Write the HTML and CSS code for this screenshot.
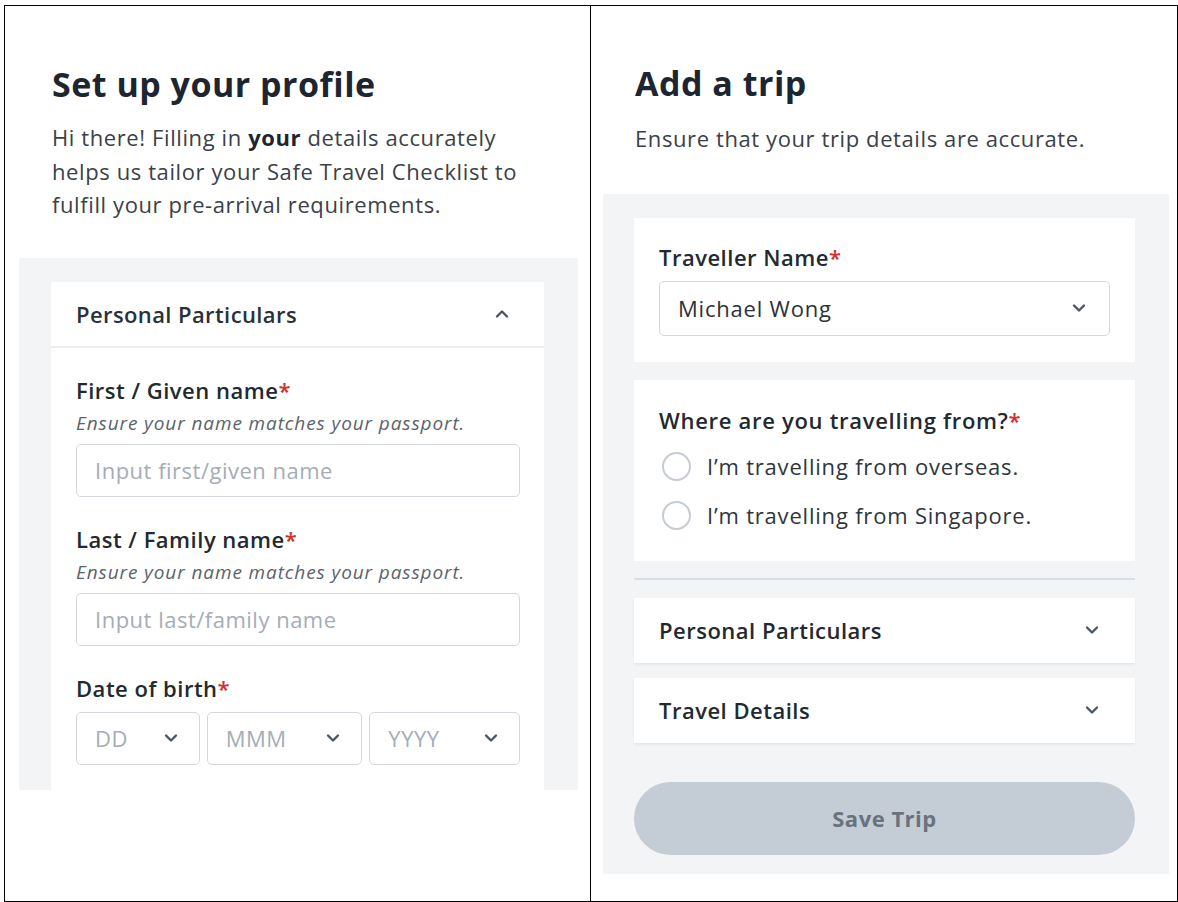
FILE: index.html
```html
<!DOCTYPE html>
<html lang="en">
<head>
    <meta charset="UTF-8">
    <meta name="viewport" content="width=device-width, initial-scale=1.0">
    <title>Safe Travel</title>
    <link rel="stylesheet" href="styles.css">
</head>
<body>
    <div class="frame">
        <section class="screen screen-profile">
            <h1 class="title">Set up your profile</h1>
            <p class="intro">Hi there! Filling in <strong>your</strong> details accurately helps us tailor your Safe Travel Checklist to fulfill your pre-arrival requirements.</p>

            <div class="panel panel-profile">
                <div class="card">
                    <div class="card-head">
                        <span>Personal Particulars</span>
                        <svg class="chev" viewBox="0 0 16 16"><path d="M3 10.5l5-5 5 5"/></svg>
                    </div>
                    <div class="card-body">
                        <label class="label">First / Given name<span class="req">*</span></label>
                        <p class="hint">Ensure your name matches your passport.</p>
                        <div class="field placeholder">Input first/given name</div>

                        <label class="label">Last / Family name<span class="req">*</span></label>
                        <p class="hint">Ensure your name matches your passport.</p>
                        <div class="field placeholder">Input last/family name</div>

                        <label class="label">Date of birth<span class="req">*</span></label>
                        <div class="dob">
                            <div class="field select placeholder dd">DD<svg class="chev" viewBox="0 0 16 16"><path d="M3 5.5l5 5 5-5"/></svg></div>
                            <div class="field select placeholder mmm">MMM<svg class="chev" viewBox="0 0 16 16"><path d="M3 5.5l5 5 5-5"/></svg></div>
                            <div class="field select placeholder yyyy">YYYY<svg class="chev" viewBox="0 0 16 16"><path d="M3 5.5l5 5 5-5"/></svg></div>
                        </div>
                    </div>
                </div>
            </div>
        </section>

        <section class="screen screen-trip">
            <h1 class="title">Add a trip</h1>
            <p class="intro">Ensure that your trip details are accurate.</p>

            <div class="panel panel-trip">
                <div class="card card-pad">
                    <label class="label">Traveller Name<span class="req">*</span></label>
                    <div class="field select value">Michael Wong<svg class="chev" viewBox="0 0 16 16"><path d="M3 5.5l5 5 5-5"/></svg></div>
                </div>

                <div class="card card-pad card-radio">
                    <label class="label">Where are you travelling from?<span class="req">*</span></label>
                    <div class="radio"><span class="dot"></span>I’m travelling from overseas.</div>
                    <div class="radio"><span class="dot"></span>I’m travelling from Singapore.</div>
                </div>

                <hr class="rule">

                <div class="card fold">
                    <span>Personal Particulars</span>
                    <svg class="chev" viewBox="0 0 16 16"><path d="M3 5.5l5 5 5-5"/></svg>
                </div>
                <div class="card fold">
                    <span>Travel Details</span>
                    <svg class="chev" viewBox="0 0 16 16"><path d="M3 5.5l5 5 5-5"/></svg>
                </div>

                <button class="save" disabled>Save Trip</button>
            </div>
        </section>
    </div>
</body>
</html>
```

FILE: styles.css
```css
* {
    box-sizing: border-box;
}
body {
    margin: 0;
    background: #fff;
    font-family: 'Open Sans', 'Noto Sans', sans-serif;
    color: #1f2933;
}
.frame {
    margin: 5px 0 0 4px;
    width: 1174px;
    height: 897px;
    border: 1px solid #000;
    display: grid;
    grid-template-columns: 586px 1fr;
    overflow: hidden;
}
.screen-profile {
    border-right: 1px solid #000;
}
.title {
    margin: 0;
    font-size: 34px;
    line-height: 40px;
    font-weight: 700;
    color: #1d2630;
    letter-spacing: 0.5px;
}
.intro {
    margin: 0;
    font-size: 22px;
    line-height: 33.5px;
    letter-spacing: 0.6px;
    color: #3b4148;
}
.intro strong {
    font-weight: 700;
    color: #1d2630;
}
.screen-profile .title {
    margin: 58px 0 0 47px;
}
.screen-profile .intro {
    margin: 17px 0 0 47px;
    width: 488px;
}
.screen-trip .title {
    margin: 57px 0 0 44px;
}
.screen-trip .intro {
    margin: 19px 0 0 44px;
}

.panel {
    background: #f3f4f6;
}
.panel-profile {
    margin: 36px 0 0 14px;
    width: 559px;
    height: 532px;
    padding: 24px 34px 0 32px;
    overflow: hidden;
}
.panel-trip {
    margin: 38px 0 0 12px;
    width: 566px;
    height: 680px;
    padding: 24px 34px 0 31px;
}
.card {
    background: #fff;
}
.card-head {
    height: 66px;
    padding: 0 34px 0 25px;
    display: flex;
    align-items: center;
    justify-content: space-between;
    border-bottom: 2px solid #eceef1;
    font-size: 22px;
    font-weight: 600;
    letter-spacing: 0.4px;
    color: #2a3138;
}
.card-body {
    padding: 27px 24px 30px 25px;
    height: 460px;
}
.label {
    display: block;
    font-size: 22px;
    line-height: 30px;
    font-weight: 600;
    letter-spacing: 0.5px;
    color: #22292f;
}
.req {
    color: #d0312d;
}
.hint {
    margin: 6px 0 9px;
    font-size: 19px;
    line-height: 24px;
    letter-spacing: 0.9px;
    font-style: italic;
    color: #5b636b;
}
.field {
    height: 53px;
    border: 1.5px solid #d3d8de;
    border-radius: 5px;
    background: #fff;
    display: flex;
    align-items: center;
    padding: 0 18px;
    font-size: 22px;
    letter-spacing: 0.5px;
    margin-bottom: 27px;
}
.placeholder {
    color: #a4adb6;
}
.value {
    color: #2b3238;
    letter-spacing: 0.8px;
}
.select {
    justify-content: space-between;
}
.chev {
    width: 16px;
    height: 16px;
    fill: none;
    stroke: #4c5661;
    stroke-width: 2.4;
    stroke-linecap: round;
    stroke-linejoin: round;
    flex-shrink: 0;
}
.dob {
    display: flex;
    gap: 7px;
    margin-top: 9px;
}
.dob .field {
    margin-bottom: 0;
    padding-right: 20px;
}
.dd {
    width: 124px;
}
.mmm {
    width: 156px;
}
.yyyy {
    width: 151px;
}

.card-pad {
    padding: 24px 25px 0 25px;
}
.panel-trip .card-pad:first-child {
    height: 144px;
}
.panel-trip .card-pad .field {
    margin-top: 9px;
    margin-bottom: 0;
    height: 55px;
    padding-right: 22px;
}
.card-radio {
    margin-top: 18px;
    height: 181px;
    padding-top: 25px;
}
.card-radio .label {
    margin-bottom: 7px;
    letter-spacing: 0.7px;
}
.radio {
    display: flex;
    align-items: center;
    gap: 16px;
    font-size: 22px;
    letter-spacing: 0.8px;
    color: #2f363d;
    height: 49px;
    margin-left: 3px;
}
.dot {
    width: 29px;
    height: 29px;
    border-radius: 50%;
    border: 2px solid #c6ccd3;
    background: #fff;
}
.rule {
    margin: 17px 0 0;
    border: 0;
    height: 2px;
    background: #d9dfe6;
}
.fold {
    height: 65px;
    display: flex;
    align-items: center;
    justify-content: space-between;
    padding: 0 35px 0 25px;
    font-size: 22px;
    font-weight: 600;
    letter-spacing: 0.5px;
    color: #22292f;
    box-shadow: 0 2px 2px rgba(0, 0, 0, 0.05);
}
.rule + .fold {
    margin-top: 18px;
}
.fold + .fold {
    margin-top: 15px;
}
.save {
    display: block;
    width: 100%;
    height: 73px;
    margin-top: 39px;
    border: none;
    border-radius: 37px;
    background: #c4ccd6;
    color: #69737e;
    font-family: inherit;
    font-size: 22px;
    font-weight: 700;
    letter-spacing: 0.5px;
}
```
